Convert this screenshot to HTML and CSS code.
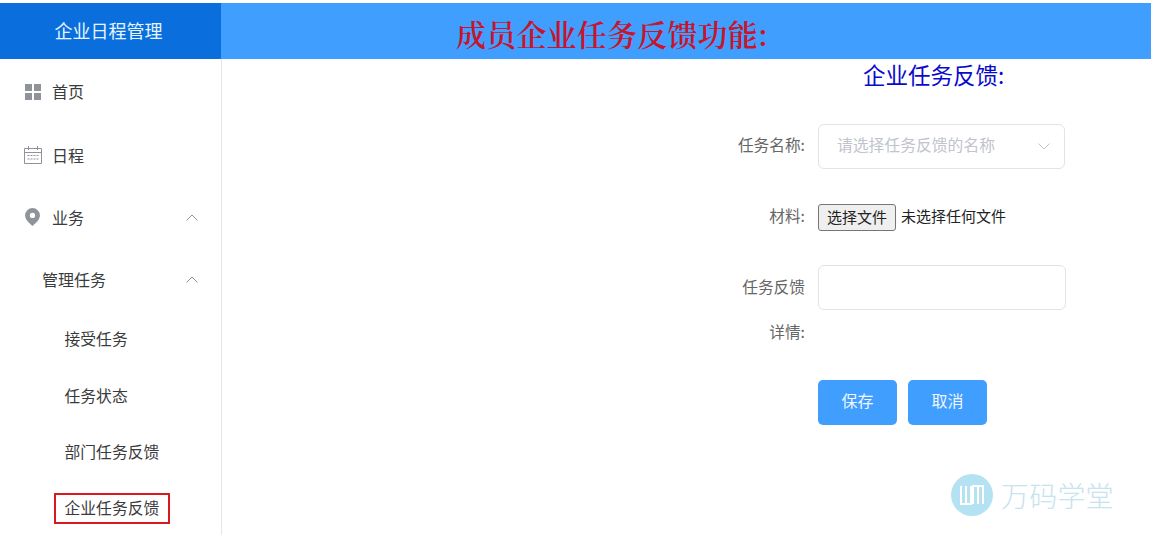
FILE: index.html
```html
<!DOCTYPE html>
<html lang="zh">
<head>
<meta charset="utf-8">
<title>企业任务反馈</title>
<link rel="stylesheet" href="styles.css">
</head>
<body>
<div class="page">
  <header class="topbar">
    <div class="brand">企业日程管理</div>
    <div class="banner"><h1 class="banner-title">成员企业任务反馈功能:</h1></div>
  </header>
  <div class="body-row">
    <nav class="sidebar">
      <div class="item item-home">
        <svg class="icon" viewBox="0 0 16 16"><path fill="#909399" d="M0 0h7v7H0zM9 0h7v7H9zM0 9h7v7H0zM9 9h7v7H9z"/></svg>
        <span>首页</span>
      </div>
      <div class="item item-cal">
        <svg class="icon icon-cal" viewBox="0 0 18 18"><path fill="none" stroke="#909399" d="M.5 2.500h17v15H.5zM.5 6.500h17M4.500 0v4M13.500 0v4"/><path stroke="#909399" stroke-dasharray="2 1" d="M3.500 9.500h11M3.500 13h11"/></svg>
        <span>日程</span>
      </div>
      <div class="item item-biz">
        <svg class="icon icon-pin" viewBox="0 0 14 17"><path fill="#909399" fill-rule="evenodd" d="M7 0a7 7 0 0 1 7 7c0 3.500-3.500 7-7 10C3.500 14 0 10.500 0 7a7 7 0 0 1 7-7zm0 4.500a2.500 2.500 0 1 0 0 5 2.500 2.500 0 0 0 0-5z"/></svg>
        <span>业务</span>
        <svg class="chev" viewBox="0 0 12 7"><path fill="none" stroke="#909399" d="M.5 6.500 6 1l5.500 5.500"/></svg>
      </div>
      <div class="item item-group">
        <span>管理任务</span>
        <svg class="chev" viewBox="0 0 12 7"><path fill="none" stroke="#909399" d="M.5 6.500 6 1l5.500 5.500"/></svg>
      </div>
      <div class="sub">接受任务</div>
      <div class="sub">任务状态</div>
      <div class="sub">部门任务反馈</div>
      <div class="sub"><span class="marked">企业任务反馈</span></div>
    </nav>
    <main class="content">
      <h2 class="form-title">企业任务反馈:</h2>
      <form class="form">
        <div class="row row-select">
          <label class="label">任务名称:</label>
          <div class="select">
            <span class="placeholder">请选择任务反馈的名称</span>
            <svg class="select-arrow" viewBox="0 0 12 7"><path fill="none" stroke="#c0c4cc" d="M.5.500 6 6l5.500-5.500"/></svg>
          </div>
        </div>
        <div class="row row-file">
          <label class="label">材料:</label>
          <span class="file-btn">选择文件</span>
          <span class="file-name">未选择任何文件</span>
        </div>
        <div class="row row-text">
          <label class="label label-wrap">任务反馈<br>详情:</label>
          <div class="textarea"></div>
        </div>
        <div class="actions">
          <button type="button" class="btn">保存</button>
          <button type="button" class="btn">取消</button>
        </div>
      </form>
    </main>
  </div>
  <div class="watermark">
    <span class="wm-logo">
      <svg viewBox="0 0 42 42"><circle cx="21" cy="21" r="21" fill="#b5e2f2"/><path fill="none" stroke="#fff" stroke-width="2" d="M10 12v18h10V12M15 12v18M22 30V12h10v18M27 12v18"/></svg>
    </span>
    <span class="wm-text">万码学堂</span>
  </div>
</div>
</body>
</html>
```

FILE: styles.css
```css
* { box-sizing: border-box; }
html, body { margin: 0; height: 100%; background: #fff; overflow: hidden; }
body { font-family: "Noto Sans CJK SC", "Liberation Sans", sans-serif; }

.page { position: relative; width: 1151px; height: 535px; padding-top: 3px; overflow: hidden; }

.topbar { display: flex; height: 56px; }
.brand {
  width: 221px; background: #0a6fdc; color: #e6f6ff; padding-right: 4px;
  font-size: 18px; line-height: 54px; text-align: center;
}
.banner { flex: 1; background: #409eff; padding-left: 235px; }
.banner-title {
  margin: 0; color: #c8142c; font-family: "Noto Serif CJK SC", "Liberation Serif", "Noto Sans CJK SC", serif;
  font-size: 30px; font-weight: 600; line-height: 61px; height: 56px; white-space: nowrap; letter-spacing: 0.200px;
}

.body-row { display: flex; height: 476px; }

.sidebar { width: 222px; flex: none; border-right: 1px solid #e2e6ec; color: #3a3b3d; font-size: 16px; }
.item { display: flex; align-items: center; padding-left: 25px; padding-right: 23px; }
.item span { line-height: 24px; }
.item-home span, .item-cal span, .item-biz span { padding-bottom: 2px; }
.item-home { height: 24px; margin-top: 21px; }
.item-cal { height: 24px; margin-top: 40px; padding-left: 24px; }
.item-biz { height: 24px; margin-top: 38px; }
.item-group { height: 24px; margin-top: 37px; padding-left: 42px; }
.icon { width: 16px; height: 16px; margin-right: 11px; flex: none; }
.icon-cal { width: 18px; height: 18px; margin-right: 10px; margin-bottom: 2px; }
.icon-pin { width: 15px; height: 18px; margin-right: 12px; margin-bottom: 2px; }
.chev { width: 12px; height: 7px; margin-left: auto; }
.item-biz .chev { margin-bottom: 2px; }
.sub { padding-left: 64.500px; font-size: 15.800px; line-height: 24px; white-space: nowrap; }
.item-group + .sub { margin-top: 36px; }
.sub + .sub { margin-top: 32.500px; }
.marked { display: inline-block; border: 2px solid #d9181f; margin: -4px 0 0 -11px; padding: 2px 9px; height: 31px; line-height: 21px; vertical-align: top; }

.content { flex: 1; color: #606266; padding-left: 496px; }
.form-title {
  margin: 0 0 0 145px; color: #0a0acb; font-size: 22.500px; font-weight: 400; line-height: 30px; white-space: nowrap;
}
.form { font-size: 15.700px; }
.row { display: flex; }
.label { width: 87px; margin-right: 13px; flex: none; text-align: right; color: #666; white-space: nowrap; }
.row-select { margin-top: 35px; height: 45px; align-items: center; }
.row-select .label, .row-file .label, .placeholder, .file-name { padding-bottom: 4px; }
.select {
  width: 247px; height: 45px; border: 1px solid #e0e3e9; border-radius: 6px;
  display: flex; align-items: center; padding: 0 14px 0 18px; font-size: 15.800px;
}
.placeholder { color: #c0c4cc; white-space: nowrap; }
.select-arrow { width: 12px; height: 7px; margin-left: auto; }
.row-file { margin-top: 34px; height: 28px; align-items: center; }
.file-btn {
  width: 78px; height: 27px; border: 1px solid #767676; border-radius: 3px; background: #efefef;
  color: #222; font-size: 15px; line-height: 23px; text-align: center; flex: none;
}
.file-name { margin-left: 5px; color: #222; font-size: 15px; white-space: nowrap; }
.row-text { margin-top: 34px; }
.label-wrap { line-height: 45px; margin-top: -1px; }
.textarea { width: 248px; height: 45px; border: 1px solid #e0e3e9; border-radius: 6px; }
.actions { display: flex; gap: 11px; margin-top: 26px; padding-left: 100px; }
.btn {
  width: 79px; height: 45px; border: 0; border-radius: 5px; padding: 0 0 6px;
  background: #409eff; color: #f0f8ff; font: inherit; font-size: 16px;
}

.watermark { position: absolute; left: 951px; top: 474px; display: flex; align-items: center; gap: 8px; }
.wm-logo { width: 42px; height: 42px; display: block; }
.wm-logo svg { display: block; width: 42px; height: 42px; }
.wm-text { color: #c6e3ef; font-size: 28px; line-height: 42px; font-weight: 300; white-space: nowrap; letter-spacing: 0.200px; }
```
